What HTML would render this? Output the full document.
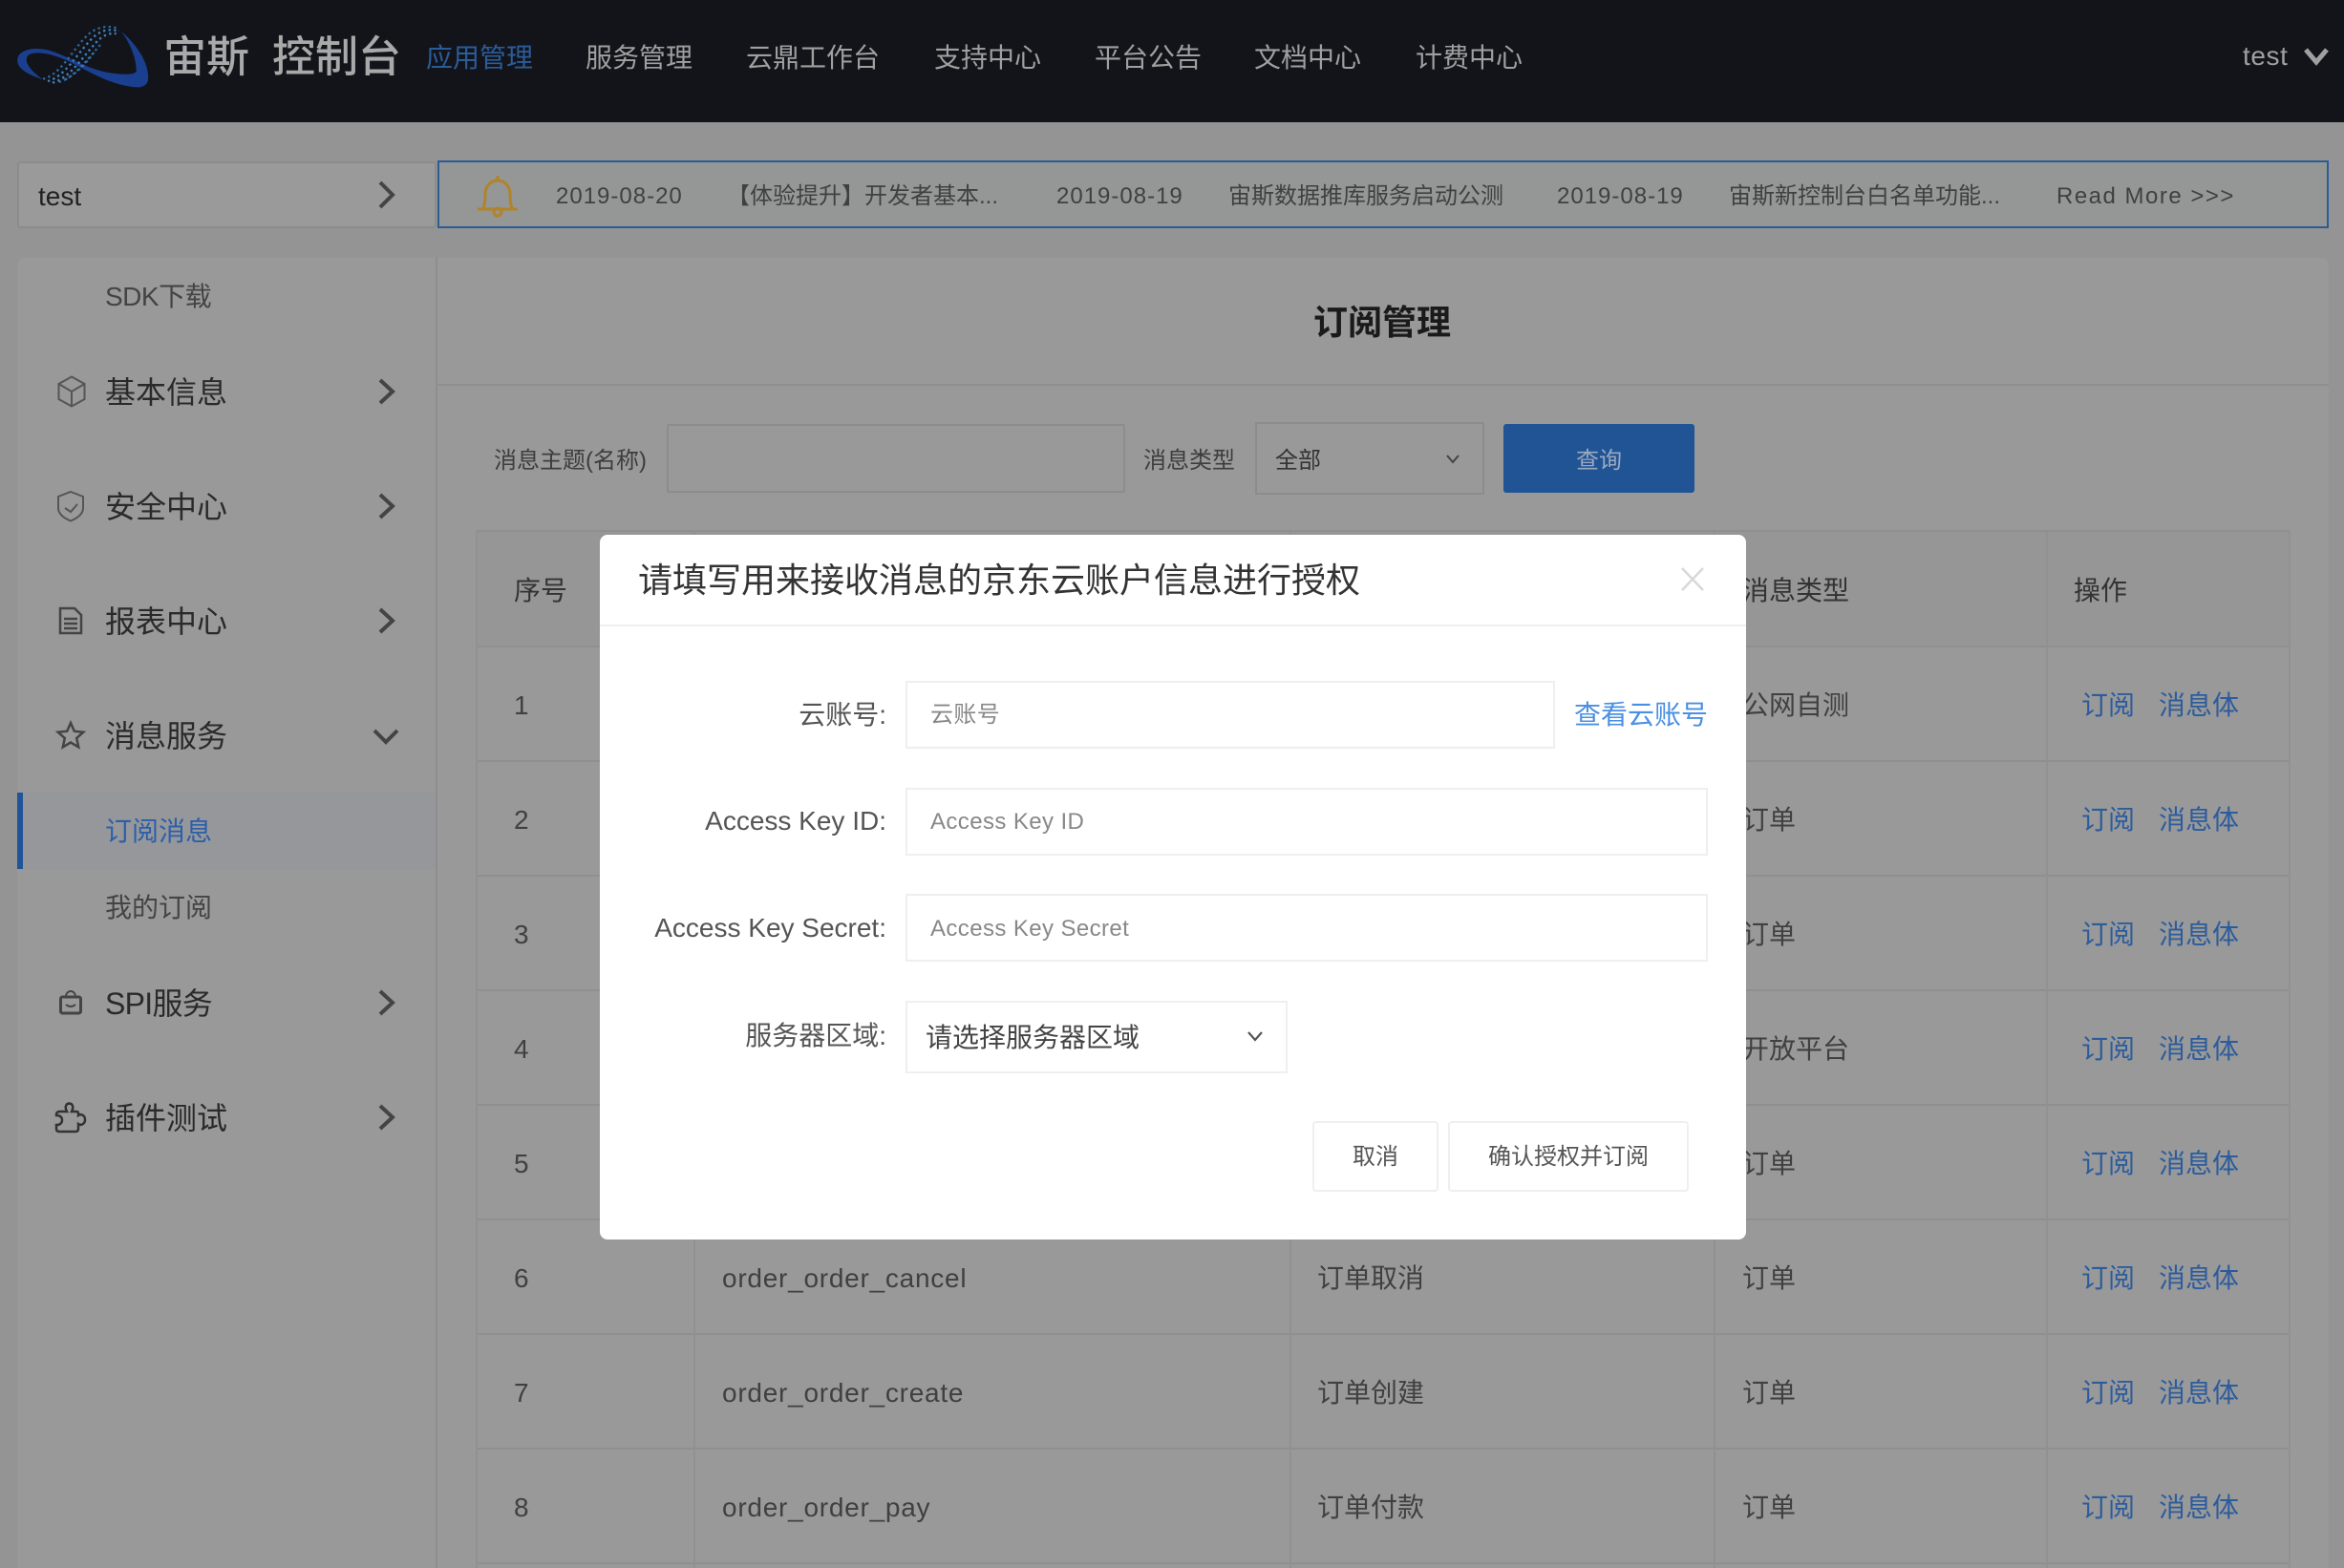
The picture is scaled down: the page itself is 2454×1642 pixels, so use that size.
<!DOCTYPE html>
<html lang="zh-CN">
<head>
<meta charset="utf-8">
<title>订阅管理</title>
<style>
html,body{margin:0;padding:0;width:2454px;height:1642px;overflow:hidden;background:#949494}
body{position:relative;font-family:"Liberation Sans","Noto Sans CJK SC",sans-serif;font-size:28px;color:#333}
.b{position:absolute;box-sizing:border-box}
.t{position:absolute;white-space:nowrap;line-height:40px;height:40px}
.r{position:absolute;left:0;width:2454px;height:40px;font-size:28px;color:#404040}
.r span{position:absolute;top:0;line-height:40px;white-space:nowrap}
.n{letter-spacing:.75px}
.a{color:#2c5c9c}
.h{background:#8f8f8f;left:499px;width:1898px;height:2px}
.v{background:#919191;top:557px;width:2px;height:1085px}
.nav{color:#a0a0a0;top:41px}
.s{font-size:32px;color:#2a2a2a}
.ss{font-size:28px;color:#444}
.nt{font-size:24px;color:#404040;top:186px}
.d{font-size:24px;letter-spacing:1px;color:#404040;top:186px}
.l{font-size:28px;color:#555;text-align:right;right:1526px}
.f{background:#fff;border:2px solid #efefef}
.p{font-size:24px;color:#888;letter-spacing:.4px}
</style>
</head>
<body>

<!-- Header -->
<div class="b" style="left:0;top:0;width:2454px;height:128px;background:#12141a"></div>
<svg style="position:absolute;left:0;top:0" width="180" height="120" viewBox="0 0 540 360">
<path d="M135 250C90 235 50 215 55 185C60 155 110 145 160 160C210 175 270 215 340 228C390 236 420 235 428 225C430 190 410 135 380 98C430 140 470 200 465 250C462 272 440 278 410 272C340 262 280 225 220 195C170 170 120 160 95 170C70 182 85 215 135 250Z" fill="#1b3f8f"/>
<g fill="none" stroke="#3d82c2" stroke-width="7" stroke-dasharray="7 10">
<path d="M135 248C190 235 225 160 275 110C300 88 335 76 372 90" opacity=".75"/>
<path d="M150 255C205 240 240 170 290 120C312 98 340 88 375 98"/>
<path d="M165 260C220 245 258 180 305 130C322 112 345 102 365 106"/>
<path d="M185 258C230 245 268 195 320 135" opacity=".75"/>
<path d="M205 250C240 232 270 200 295 165" opacity=".7"/>
</g>
</svg>
<span class="t" style="left:171px;top:40px;font-size:45px;color:#a9a9a9;font-weight:500">宙斯</span>
<span class="t" style="left:285px;top:40px;font-size:45px;color:#a9a9a9;font-weight:500">控制台</span>
<span class="t nav" style="left:446px;color:#2b5c9a">应用管理</span>
<span class="t nav" style="left:613px">服务管理</span>
<span class="t nav" style="left:781px">云鼎工作台</span>
<span class="t nav" style="left:978px">支持中心</span>
<span class="t nav" style="left:1146px">平台公告</span>
<span class="t nav" style="left:1313px">文档中心</span>
<span class="t nav" style="left:1482px">计费中心</span>
<span class="t nav" style="left:2348px;top:39px;letter-spacing:.6px">test</span>

<!-- Test box -->
<div class="b" style="left:18px;top:169px;width:439px;height:70px;background:#9a9a9a;border:2px solid #8c8c8c;border-radius:3px"></div>
<span class="t" style="left:40px;top:186px;color:#222">test</span>

<!-- Notice box -->
<div class="b" style="left:458px;top:168px;width:1980px;height:71px;background:#959696;border:2px solid #2c5c96"></div>
<span class="t d" style="left:582px">2019-08-20</span>
<span class="t nt" style="left:761px">【体验提升】开发者基本...</span>
<span class="t d" style="left:1106px">2019-08-19</span>
<span class="t nt" style="left:1286px">宙斯数据推库服务启动公测</span>
<span class="t d" style="left:1630px">2019-08-19</span>
<span class="t nt" style="left:1810px">宙斯新控制台白名单功能...</span>
<span class="t nt" style="left:2153px;letter-spacing:1.5px">Read More &gt;&gt;&gt;</span>

<!-- Sidebar -->
<div class="b" style="left:18px;top:270px;width:440px;height:1372px;background:#999;border-right:2px solid #8e8e8e;border-top-left-radius:8px"></div>
<span class="t ss" style="left:110px;top:291px;letter-spacing:-.5px">SDK下载</span>
<span class="t s" style="left:110px;top:391px">基本信息</span>
<span class="t s" style="left:110px;top:511px">安全中心</span>
<span class="t s" style="left:110px;top:631px">报表中心</span>
<span class="t s" style="left:110px;top:751px">消息服务</span>
<div class="b" style="left:18px;top:830px;width:438px;height:80px;background:#95979b"></div>
<div class="b" style="left:18px;top:830px;width:6px;height:80px;background:#1f5499"></div>
<span class="t ss" style="left:110px;top:851px;color:#2c5fa8">订阅消息</span>
<span class="t ss" style="left:110px;top:931px">我的订阅</span>
<span class="t s" style="left:110px;top:1031px;letter-spacing:-.7px">SPI服务</span>
<span class="t s" style="left:110px;top:1151px">插件测试</span>

<!-- Content -->
<div class="b" style="left:458px;top:270px;width:1980px;height:1372px;background:#999;border-top-right-radius:8px"></div>
<div class="b" style="left:458px;top:402px;width:1980px;height:2px;background:#8f8f8f"></div>
<span class="t" style="left:1375px;top:318px;font-size:36px;font-weight:700;color:#1a1a1a">订阅管理</span>
<span class="t" style="left:517px;top:463px;font-size:24px;color:#3d3d3d">消息主题(名称)</span>
<div class="b" style="left:698px;top:444px;width:480px;height:72px;border:2px solid #8c8c8c;border-radius:2px"></div>
<span class="t" style="left:1197px;top:463px;font-size:24px;color:#3d3d3d">消息类型</span>
<div class="b" style="left:1314px;top:442px;width:240px;height:76px;border:2px solid #8c8c8c"></div>
<span class="t" style="left:1335px;top:463px;font-size:24px;color:#333">全部</span>
<div class="b" style="left:1574px;top:444px;width:200px;height:72px;background:#215495;border-radius:3px"></div>
<span class="t" style="left:1650px;top:463px;font-size:24px;color:#9aa9c0">查询</span>

<!-- Table -->
<div class="b" style="left:499px;top:557px;width:1898px;height:1085px;background:#999"></div>
<div class="b" style="left:499px;top:557px;width:1898px;height:120px;background:#969696"></div>
<div class="b h" style="top:555px"></div>
<div class="b h" style="top:676px"></div>
<div class="b h" style="top:796px"></div>
<div class="b h" style="top:916px"></div>
<div class="b h" style="top:1036px"></div>
<div class="b h" style="top:1156px"></div>
<div class="b h" style="top:1276px"></div>
<div class="b h" style="top:1396px"></div>
<div class="b h" style="top:1516px"></div>
<div class="b h" style="top:1636px"></div>
<div class="b v" style="left:498px"></div>
<div class="b v" style="left:726px"></div>
<div class="b v" style="left:1350px"></div>
<div class="b v" style="left:1794px"></div>
<div class="b v" style="left:2142px"></div>
<div class="b v" style="left:2396px"></div>

<div class="r" style="top:599px;color:#333"><span style="left:538px">序号</span><span style="left:1824px">消息类型</span><span style="left:2171px">操作</span></div>
<div class="r" style="top:719px"><span style="left:538px">1</span><span style="left:1824px">公网自测</span><span class="a" style="left:2179px">订阅</span><span class="a" style="left:2260px">消息体</span></div>
<div class="r" style="top:839px"><span style="left:538px">2</span><span style="left:1824px">订单</span><span class="a" style="left:2179px">订阅</span><span class="a" style="left:2260px">消息体</span></div>
<div class="r" style="top:959px"><span style="left:538px">3</span><span style="left:1824px">订单</span><span class="a" style="left:2179px">订阅</span><span class="a" style="left:2260px">消息体</span></div>
<div class="r" style="top:1079px"><span style="left:538px">4</span><span style="left:1824px">开放平台</span><span class="a" style="left:2179px">订阅</span><span class="a" style="left:2260px">消息体</span></div>
<div class="r" style="top:1199px"><span style="left:538px">5</span><span style="left:1824px">订单</span><span class="a" style="left:2179px">订阅</span><span class="a" style="left:2260px">消息体</span></div>
<div class="r" style="top:1319px"><span style="left:538px">6</span><span class="n" style="left:756px">order_order_cancel</span><span style="left:1379px">订单取消</span><span style="left:1824px">订单</span><span class="a" style="left:2179px">订阅</span><span class="a" style="left:2260px">消息体</span></div>
<div class="r" style="top:1439px"><span style="left:538px">7</span><span class="n" style="left:756px">order_order_create</span><span style="left:1379px">订单创建</span><span style="left:1824px">订单</span><span class="a" style="left:2179px">订阅</span><span class="a" style="left:2260px">消息体</span></div>
<div class="r" style="top:1559px"><span style="left:538px">8</span><span class="n" style="left:756px">order_order_pay</span><span style="left:1379px">订单付款</span><span style="left:1824px">订单</span><span class="a" style="left:2179px">订阅</span><span class="a" style="left:2260px">消息体</span></div>

<!-- Modal -->
<div class="b" style="left:628px;top:560px;width:1200px;height:738px;background:#fff;border-radius:8px"></div>
<div class="b" style="left:628px;top:654px;width:1200px;height:2px;background:#efefef"></div>
<span class="t" style="left:668px;top:588px;font-size:36px;color:#333">请填写用来接收消息的京东云账户信息进行授权</span>

<span class="t l" style="top:729px">云账号:</span>
<div class="b f" style="left:948px;top:713px;width:680px;height:71px"></div>
<span class="t p" style="left:974px;top:729px">云账号</span>
<span class="t" style="left:1648px;top:729px;color:#4a90e2">查看云账号</span>

<span class="t l" style="top:840px">Access Key ID:</span>
<div class="b f" style="left:948px;top:825px;width:840px;height:71px"></div>
<span class="t p" style="left:974px;top:841px">Access Key ID</span>

<span class="t l" style="top:952px">Access Key Secret:</span>
<div class="b f" style="left:948px;top:936px;width:840px;height:71px"></div>
<span class="t p" style="left:974px;top:953px">Access Key Secret</span>

<span class="t l" style="top:1065px">服务器区域:</span>
<div class="b f" style="left:948px;top:1048px;width:400px;height:76px"></div>
<span class="t" style="left:969px;top:1067px;color:#444">请选择服务器区域</span>

<div class="b f" style="left:1374px;top:1174px;width:132px;height:74px;border-radius:4px"></div>
<span class="t" style="left:1416px;top:1192px;font-size:24px;color:#555">取消</span>
<div class="b f" style="left:1516px;top:1174px;width:252px;height:74px;border-radius:4px"></div>
<span class="t" style="left:1558px;top:1192px;font-size:24px;color:#555">确认授权并订阅</span>

<!-- Icons -->
<svg style="position:absolute;left:0;top:0" width="2454" height="1642" viewBox="0 0 2454 1642" fill="none">
<g stroke="#a0a0a0" stroke-width="5"><path d="M2414 52L2425 65L2436 52"/></g>
<g stroke="#444" stroke-width="4">
<path d="M398 191L411 204L398 217"/>
<path d="M398 398L411 410L398 422"/>
<path d="M398 518L411 530L398 542"/>
<path d="M398 638L411 650L398 662"/>
<path d="M392 765L404 777L416 765"/>
<path d="M398 1038L411 1050L398 1062"/>
<path d="M398 1158L411 1170L398 1182"/>
</g>
<!-- bell -->
<g stroke="#b0842a" stroke-width="3">
<path d="M506 218C508 213 508 208 508 203C508 195 514 189 521 189C528 189 534 195 534 203C534 208 534 213 536 218"/>
<path d="M500 219H542"/>
<path d="M521 184V189"/>
<circle cx="521" cy="222" r="4"/>
</g>
<!-- cube -->
<g stroke="#555" stroke-width="2">
<path d="M75 394.5L88.5 402V418L75 425.5L61.5 418V402Z"/>
<path d="M61.5 402L75 410L88.5 402M75 410V425.5"/>
</g>
<!-- shield -->
<g stroke="#555" stroke-width="2">
<path d="M74 515L87 520V532C87 539 80 543 74 545.5C68 543 61 539 61 532V520Z"/>
<path d="M68 532L74 536L81 528"/>
</g>
<!-- report -->
<g stroke="#444" stroke-width="2.5">
<path d="M63 637H78L85 644V663H63Z"/>
<path d="M67 648H81M67 653H81M67 658H81"/>
</g>
<!-- star -->
<path d="M74 757L77.8 765.7L87.3 766.7L80.2 773L82.2 782.3L74 777.5L65.8 782.3L67.8 773L60.7 766.7L70.2 765.7Z" stroke="#444" stroke-width="2.5"/>
<!-- bag -->
<g stroke="#444">
<rect x="63.5" y="1044" width="21" height="17" rx="2" stroke-width="3"/>
<path d="M69 1044C69 1036 79 1036 79 1044" stroke-width="2"/>
<path d="M69 1052Q74 1056 79 1052" stroke-width="2"/>
</g>
<!-- puzzle -->
<path d="M63 1164H70C67 1158 70 1155.5 72.5 1155.5C75 1155.5 78 1158 75 1164H80Q82 1164 82 1166V1168C85 1166 89 1168 89 1172.5C89 1177 85 1179 82 1177V1182Q82 1185 79 1185H62Q59 1185 59 1182V1178C63 1178 65 1176 65 1173C65 1170 63 1168 59 1168V1167Q59 1164 63 1164Z" stroke="#333" stroke-width="2.5"/>
<!-- select arrows -->
<path d="M1515 477L1521 484L1527 477" stroke="#444" stroke-width="2"/>
<path d="M1307 1081L1314 1089L1321 1081" stroke="#555" stroke-width="2.2"/>
<!-- close -->
<path d="M1761 595L1783 618M1783 595L1761 618" stroke="#d8d8d8" stroke-width="2.5"/>
</svg>
</body>
</html>
